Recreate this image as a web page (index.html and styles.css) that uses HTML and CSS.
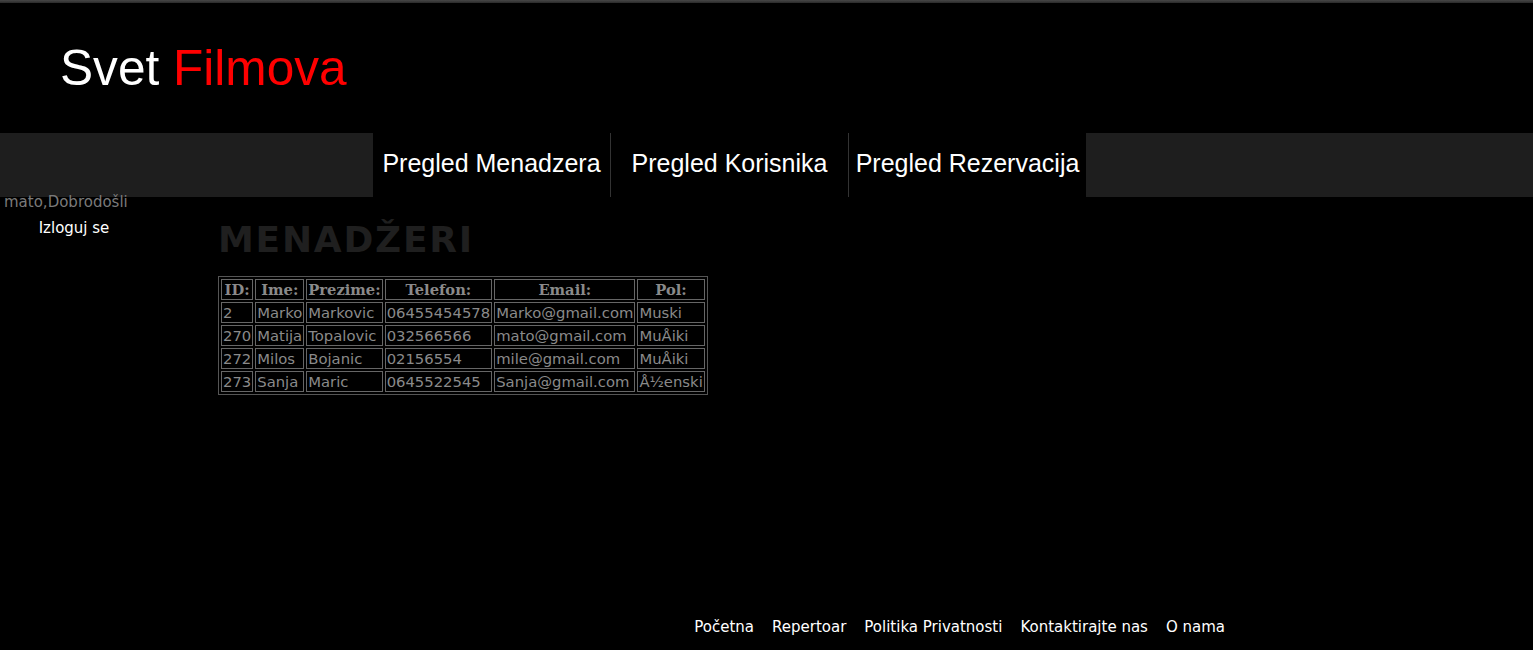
FILE: index.html
```html
<!DOCTYPE html>
<html lang="sr">
<head>
<meta charset="utf-8">
<title>Svet Filmova</title>
<link rel="stylesheet" href="styles.css">
</head>
<body>
<div class="page">
  <div class="topbar"></div>
  <header class="header">
    <h1 class="logo">Svet <span class="logo-red">Filmova</span></h1>
  </header>
  <nav class="nav">
    <ul class="nav-list">
      <li class="nav-item"><a href="#">Pregled Menadzera</a></li>
      <li class="nav-item"><a href="#">Pregled Korisnika</a></li>
      <li class="nav-item"><a href="#">Pregled Rezervacija</a></li>
    </ul>
  </nav>
  <div class="main">
    <aside class="sidebar">
      <div class="welcome">mato,Dobrodošli</div>
      <a class="logout" href="#">Izloguj se</a>
    </aside>
    <section class="content">
      <h2 class="title">MENADŽERI</h2>
      <table class="grid" border="1">
        <tr><th>ID:</th><th>Ime:</th><th>Prezime:</th><th>Telefon:</th><th>Email:</th><th>Pol:</th></tr>
        <tr><td>2</td><td>Marko</td><td>Markovic</td><td>06455454578</td><td>Marko@gmail.com</td><td>Muski</td></tr>
        <tr><td>270</td><td>Matija</td><td>Topalovic</td><td>032566566</td><td>mato@gmail.com</td><td>MuÅiki</td></tr>
        <tr><td>272</td><td>Milos</td><td>Bojanic</td><td>02156554</td><td>mile@gmail.com</td><td>MuÅiki</td></tr>
        <tr><td>273</td><td>Sanja</td><td>Maric</td><td>0645522545</td><td>Sanja@gmail.com</td><td>Å½enski</td></tr>
      </table>
    </section>
  </div>
  <footer class="footer">
    <a href="#">Početna</a>
    <a href="#">Repertoar</a>
    <a href="#">Politika Privatnosti</a>
    <a href="#">Kontaktirajte nas</a>
    <a href="#">O nama</a>
  </footer>
</div>
</body>
</html>
```
FILE: styles.css
```css
html, body {
  margin: 0;
  padding: 0;
  background: #000;
}
.page {
  height: 650px;
  display: flex;
  flex-direction: column;
  overflow: hidden;
}
.topbar {
  height: 3px;
  background: linear-gradient(#474747, #2a2a2a);
  flex: none;
}
.header {
  height: 130px;
  flex: none;
  box-sizing: border-box;
  padding: 37px 0 0 60px;
}
.logo {
  margin: 0;
  font-family: "Liberation Sans", Arial, sans-serif;
  font-weight: normal;
  font-size: 49.6px;
  line-height: 56px;
  color: #fff;
}
.logo-red {
  color: #ff0000;
}
.nav {
  height: 64px;
  flex: none;
  background: #1e1e1e;
  padding-left: 373px;
  display: flex;
}
.nav-list {
  list-style: none;
  margin: 0;
  padding: 0;
  display: flex;
  background: #000;
}
.nav-item {
  width: 237px;
  text-align: center;
}
.nav-item + .nav-item {
  border-left: 1px solid #333;
}
.nav-item a {
  display: block;
  font-family: "Liberation Sans", Arial, sans-serif;
  font-size: 25px;
  line-height: 60px;
  color: #fff;
  text-decoration: none;
}
.main {
  flex: 1;
  display: flex;
}
.sidebar {
  width: 148px;
  flex: none;
  font-family: "DejaVu Sans", Tahoma, sans-serif;
  font-size: 15px;
}
.welcome {
  color: #7a7a7a;
  padding-left: 4px;
  line-height: 18px;
  margin-top: -4px;
}
.logout {
  display: block;
  text-align: center;
  color: #fff;
  text-decoration: none;
  margin-top: 8px;
  line-height: 18px;
}
.content {
  padding-left: 70px;
}
.title {
  margin: 22px 0 15px 0;
  font-family: "DejaVu Sans", Verdana, sans-serif;
  font-weight: bold;
  font-size: 36px;
  line-height: 42px;
  color: #1f1f1f;
  letter-spacing: 1.75px;
}
.grid {
  border: 1px solid #555;
  border-spacing: 2px;
  color: #8a8a8a;
}
.grid th,
.grid td {
  border: 1px solid #666;
  padding: 1px;
  line-height: 17px;
  white-space: nowrap;
}
.grid th {
  font-family: "DejaVu Serif", serif;
  font-size: 14.7px;
  font-weight: bold;
  text-align: center;
}
.grid td {
  font-family: "DejaVu Sans", Verdana, sans-serif;
  font-size: 14.8px;
}
.footer {
  flex: none;
  height: 40px;
  box-sizing: border-box;
  padding: 8px 308px 0 0;
  display: flex;
  justify-content: flex-end;
  gap: 18px;
  font-family: "DejaVu Sans", Tahoma, sans-serif;
  font-size: 15px;
}
.footer a {
  color: #fff;
  text-decoration: none;
  line-height: 18px;
}
```
